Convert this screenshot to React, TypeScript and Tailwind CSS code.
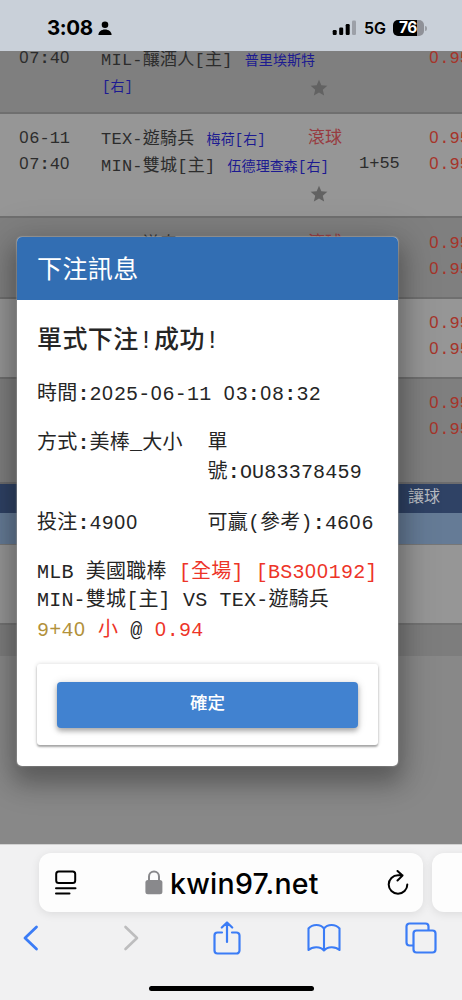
import React from "react";

function Mono({ children }: { children: string }) {
  return (
    <>
      {children.split(/(0|:)/).map((part, i) =>
        part === ":" ? (
          <b key={i}>:</b>
        ) : part === "0" ? (
          <span key={i} className="ml-[0.015em] font-['Liberation_Sans'] text-[0.98em] tracking-[0.045em]">0</span>
        ) : (
          part
        ),
      )}
    </>
  );
}

function Star() {
  return (
    <svg viewBox="0 0 24 24" className="h-[20px] w-[20px] fill-[#626262]">
      <path d="M12 17.27 18.18 21l-1.64-7.03L22 9.24l-7.19-.61L12 2 9.19 8.63 2 9.24l5.46 4.73L5.82 21z" />
    </svg>
  );
}

function Odds() {
  return (
    <div className="shrink-0 leading-[25.4px] text-[#a6342a]">
      <div><Mono>0.95</Mono></div>
      <div><Mono>0.95</Mono></div>
    </div>
  );
}

function Team({ name, pitcher }: { name: string; pitcher?: string }) {
  return (
    <div className="flex h-[27.5px] items-center gap-[12px]">
      <span className="pt-px tracking-[0.25px]"><Mono>{name}</Mono></span>
      {pitcher && <span className="pt-[3px] text-[14px] tracking-[0.1px] text-[#1c1a91]">{pitcher}</span>}
    </div>
  );
}

function Games() {
  return (
    <div className="flex w-[500px] flex-col whitespace-nowrap text-[17px] tracking-[0px] text-[#2c2c2c]">
      <div className="flex h-[63px] shrink-0 border-b-2 border-[#6f6f6f] bg-[#7f7f7f]">
        <div className="-mt-[6px] w-[101px] shrink-0 pl-[19px] leading-[25.4px]"><Mono>07:40</Mono></div>
        <div className="-mt-[5px] w-[207px] shrink-0">
          <Team name="MIL-釀酒人[主]" pitcher="普里埃斯特" />
          <div className="pl-px text-[14px] leading-[27px] text-[#1c1a91]">[右]</div>
        </div>
        <div className="w-[121px] shrink-0 pl-[1px] pt-[27px]"><Star /></div>
        <div className="-mt-[6px] leading-[25.4px] text-[#a6342a]"><Mono>0.95</Mono></div>
      </div>
      <div className="flex h-[104px] shrink-0 border-b-2 border-[#6f6f6f] bg-[#969696] pt-[11px]">
        <div className="w-[101px] shrink-0 pl-[19px] leading-[25.4px]">
          <div><Mono>06-11</Mono></div>
          <div><Mono>07:40</Mono></div>
        </div>
        <div className="w-[207px] shrink-0">
          <Team name="TEX-遊騎兵" pitcher="梅荷[右]" />
          <Team name="MIN-雙城[主]" pitcher="伍德理查森[右]" />
        </div>
        <div className="w-[51px] shrink-0">
          <div className="leading-[27px] text-[#983b40]">滾球</div>
          <div className="pl-[1px] pt-[32px]"><Star /></div>
        </div>
        <div className="w-[70px] shrink-0 pt-[26px] leading-[25.4px]">1+55</div>
        <Odds />
      </div>
      <div className="flex h-[81px] shrink-0 border-b-2 border-[#6f6f6f] bg-[#7f7f7f] pt-[12px]">
        <div className="w-[101px]" />
        <div className="w-[207px]"><Team name="LAD-道奇" /></div>
        <div className="w-[121px] leading-[27px] text-[#983b40]">滾球</div>
        <Odds />
      </div>
      <div className="flex h-[80px] shrink-0 border-b-2 border-[#6f6f6f] bg-[#969696] pl-[429px] pt-[11px]"><Odds /></div>
      <div className="flex h-[105px] shrink-0 border-b-2 border-[#6c6c6e] bg-[#7f7f7f] pl-[429px] pt-[11px]"><Odds /></div>
      <div className="h-[29px] shrink-0 bg-[#2f4265] pl-[408px] text-[16px] leading-[28px] text-[#b7bbc1]">讓球</div>
      <div className="h-[32px] shrink-0 border-b border-[#777] bg-[#657b96]" />
      <div className="h-[80px] shrink-0 border-b-2 border-[#737373] bg-[#969696]" />
      <div className="h-[31px] shrink-0 bg-[#7d7d7d]" />
    </div>
  );
}

function Dialog() {
  return (
    <div className="absolute left-[17px] top-[186px] flex h-[529px] w-[381px] flex-col overflow-hidden whitespace-nowrap rounded-[5px] bg-white text-[20px] tracking-[0.2px] text-[#252525] shadow-[0_14px_22px_4px_rgba(0,0,0,0.24),0_6px_38px_8px_rgba(0,0,0,0.15),0_0_1px_1px_rgba(200,200,200,0.5)]">
      <div className="h-[63px] shrink-0 bg-[#326eb3] pl-[20px] text-[25px] leading-[70px] tracking-[0.4px] text-white">下注訊息</div>
      <div className="flex flex-1 flex-col px-[20px]">
        <div className="mt-[24px] h-[37px] text-[25px] font-medium leading-[36px] tracking-[0.4px]">單式下注!成功!</div>
        <div className="mt-[18px] h-[29px] leading-[28px]"><Mono>時間:2025-06-11 03:08:32</Mono></div>
        <div className="mt-[21px] grid h-[59px] grid-cols-2 leading-[29px]">
          <div><Mono>方式:美棒_大小</Mono></div>
          <div>
            <div className="h-[29px]">單</div>
            <div className="h-[29px]"><Mono>號:OU83378459</Mono></div>
          </div>
        </div>
        <div className="mt-[20px] grid h-[29px] grid-cols-2 leading-[28px]">
          <div><Mono>投注:4900</Mono></div>
          <div><Mono>可贏(參考):4606</Mono></div>
        </div>
        <div className="mt-[20px] h-[88px] leading-[29px]">
          <div className="h-[29.400px]">MLB 美國職棒 <span className="text-[#ed3428]"><Mono>[全場] [BS300192]</Mono></span></div>
          <div className="h-[29.400px]">MIN-雙城[主] VS TEX-遊騎兵</div>
          <div className="-mt-px h-[29.400px]">
            <span className="text-[#b2913a]"><Mono>9+40</Mono></span> <span className="text-[#ed3428]">小</span> @ <span className="text-[#ed3428]"><Mono>0.94</Mono></span>
          </div>
        </div>
        <div className="mt-[19px] h-[81px] shrink-0 rounded-[3px] px-[20px] pt-[18px] shadow-[0_2px_2px_rgba(0,0,0,0.3),0_0_4px_rgba(0,0,0,0.16)]">
          <button className="block h-[46px] w-full rounded-[4px] bg-[#4182d0] pb-[1px] text-[17.5px] font-medium tracking-[0px] text-white shadow-[0_3px_5px_rgba(0,0,0,0.28),0_1px_10px_rgba(0,0,0,0.14)]">確定</button>
        </div>
      </div>
    </div>
  );
}

function StatusBar() {
  return (
    <header className="relative z-10 flex h-[51px] shrink-0 items-center bg-[#c9d0d9] pt-[5px] font-['Inter']">
      <span className="ml-[47px] w-[51px] text-[20.5px] font-bold tracking-[-0.4px] text-black">3:08</span>
      <svg viewBox="0 0 14 15" className="h-[15px] w-[14px]">
        <circle cx="7" cy="3.8" r="3.3" />
        <path d="M.4 14C.4 10.600 3.500 8.500 7 8.500s6.600 2.100 6.600 5.500z" />
      </svg>
      <svg viewBox="0 0 24 16" className="ml-[220px] h-[16px] w-[24px]">
        <rect x=".7" y="10" width="4" height="5" rx="1.2" />
        <rect x="7.200" y="7.500" width="4" height="7.500" rx="1.2" />
        <rect x="13.700" y="4" width="4" height="11" rx="1.2" />
        <rect x="20" y=".5" width="4" height="14.500" rx="1.2" fill="#9ca0a8" />
      </svg>
      <span className="ml-[8px] w-[29px] text-[16px] font-semibold text-black">5G</span>
      <div className="flex h-[16px] w-[31px] items-center justify-center rounded-[5px] bg-linear-to-r from-black from-76% to-[#8f9198] to-76% pr-[1px] text-[15.5px] font-bold tracking-[-0.5px] text-white">76</div>
      <div className="ml-[1px] h-[5px] w-[2px] rounded-r-full bg-[#9a9da4]" />
    </header>
  );
}

function BrowserBar() {
  return (
    <footer className="h-[156px] shrink-0 border-t border-[#d2d2d2] bg-[#f1f1f2]">
      <div className="flex w-[500px] gap-[9px] pl-[39px] pt-[8px]">
        <div className="flex h-[59px] w-[384px] shrink-0 items-center rounded-[12px] bg-[#fdfdfd] shadow-[0_2px_10px_rgba(0,0,0,0.09)]">
          <svg viewBox="0 0 22 26" className="ml-[16px] h-[26px] w-[22px] fill-none stroke-black" strokeWidth="2" strokeLinecap="round">
            <rect x="1.200" y="1.500" width="19" height="11.500" rx="2.500" />
            <path d="M1 18.300h19.500M1 23.600h13.500" />
          </svg>
          <svg viewBox="0 0 18 25" className="ml-[68px] h-[25px] w-[18px]">
            <path d="M4 11V6.500a5 5 0 0 1 10 0V11" fill="none" stroke="#89898c" strokeWidth="2" />
            <rect x=".4" y="10" width="17" height="14.300" rx="2.500" fill="#89898c" />
          </svg>
          <span className="ml-[7px] w-[217px] pt-[3px] font-['Inter'] text-[28.500px] font-medium tracking-[0.25px] text-black">kwin97.net</span>
          <svg viewBox="0 0 22 26" className="h-[26px] w-[22px] shrink-0 fill-none stroke-black" strokeWidth="2" strokeLinecap="round" strokeLinejoin="round">
            <path d="M20.300 14.500A9.300 9.300 0 1 1 11 5.200h4.500M10.500 1l5 4.600-5 4.900" />
          </svg>
        </div>
        <div className="h-[59px] w-[60px] rounded-[12px] bg-[#fdfdfd] shadow-[0_2px_10px_rgba(0,0,0,0.09)]" />
      </div>
      <div className="mt-[4px] flex h-[44px] items-center pl-[23px]">
        <svg viewBox="0 0 16 26" className="h-[26px] w-[16px] fill-none stroke-[#3b7cf6]" strokeWidth="2.8" strokeLinecap="round" strokeLinejoin="round"><path d="M13.500 2 2 13l11.500 11" /></svg>
        <svg viewBox="0 0 16 26" className="ml-[84px] h-[26px] w-[16px] fill-none stroke-[#bdbdbe]" strokeWidth="2.600" strokeLinecap="round" strokeLinejoin="round"><path d="M2.500 2 14 13 2.500 24" /></svg>
        <svg viewBox="0 0 28 34" className="ml-[74px] h-[34px] w-[28px] fill-none stroke-[#3b7cf6]" strokeWidth="2.200" strokeLinecap="round" strokeLinejoin="round">
          <path d="M9 11.500H4.500a3 3 0 0 0-3 3v15a3 3 0 0 0 3 3h19a3 3 0 0 0 3-3v-15a3 3 0 0 0-3-3H19M14 21V1.500M8.800 6.500 14 1.500l5.200 5" />
        </svg>
        <svg viewBox="0 0 34 30" className="ml-[66px] h-[30px] w-[34px] fill-none stroke-[#3b7cf6]" strokeWidth="2.100" strokeLinecap="round" strokeLinejoin="round">
          <path d="M17 27.500V5.500M17 5.500C13.500.8 5.500.8 1.500 5.500v21.500c4-3.800 12-3.800 15.500.5 3.500-4.300 11.500-4.300 15.500-.5V5.500C28.500.8 20.500.8 17 5.500" />
        </svg>
        <svg viewBox="0 0 32 32" className="ml-[64px] h-[32px] w-[32px] fill-none stroke-[#3b7cf6]" strokeWidth="2.200">
          <path d="M8.500 23.500H4.500a3 3 0 0 1-3-3V4.500a3 3 0 0 1 3-3h16a3 3 0 0 1 3 3v4" />
          <rect x="8.500" y="8.500" width="22" height="22" rx="3" />
        </svg>
      </div>
      <div className="mx-auto mt-[26px] h-[5px] w-[165px] rounded-full bg-black" />
    </footer>
  );
}

export default function App() {
  return (
    <div className="flex h-[1000px] w-[462px] flex-col overflow-hidden font-['Liberation_Mono','Noto_Sans_CJK_TC',monospace]">
      <StatusBar />
      <main className="relative min-h-0 flex-1 overflow-hidden bg-[#888888]">
        <Games />
        <Dialog />
      </main>
      <BrowserBar />
    </div>
  );
}
